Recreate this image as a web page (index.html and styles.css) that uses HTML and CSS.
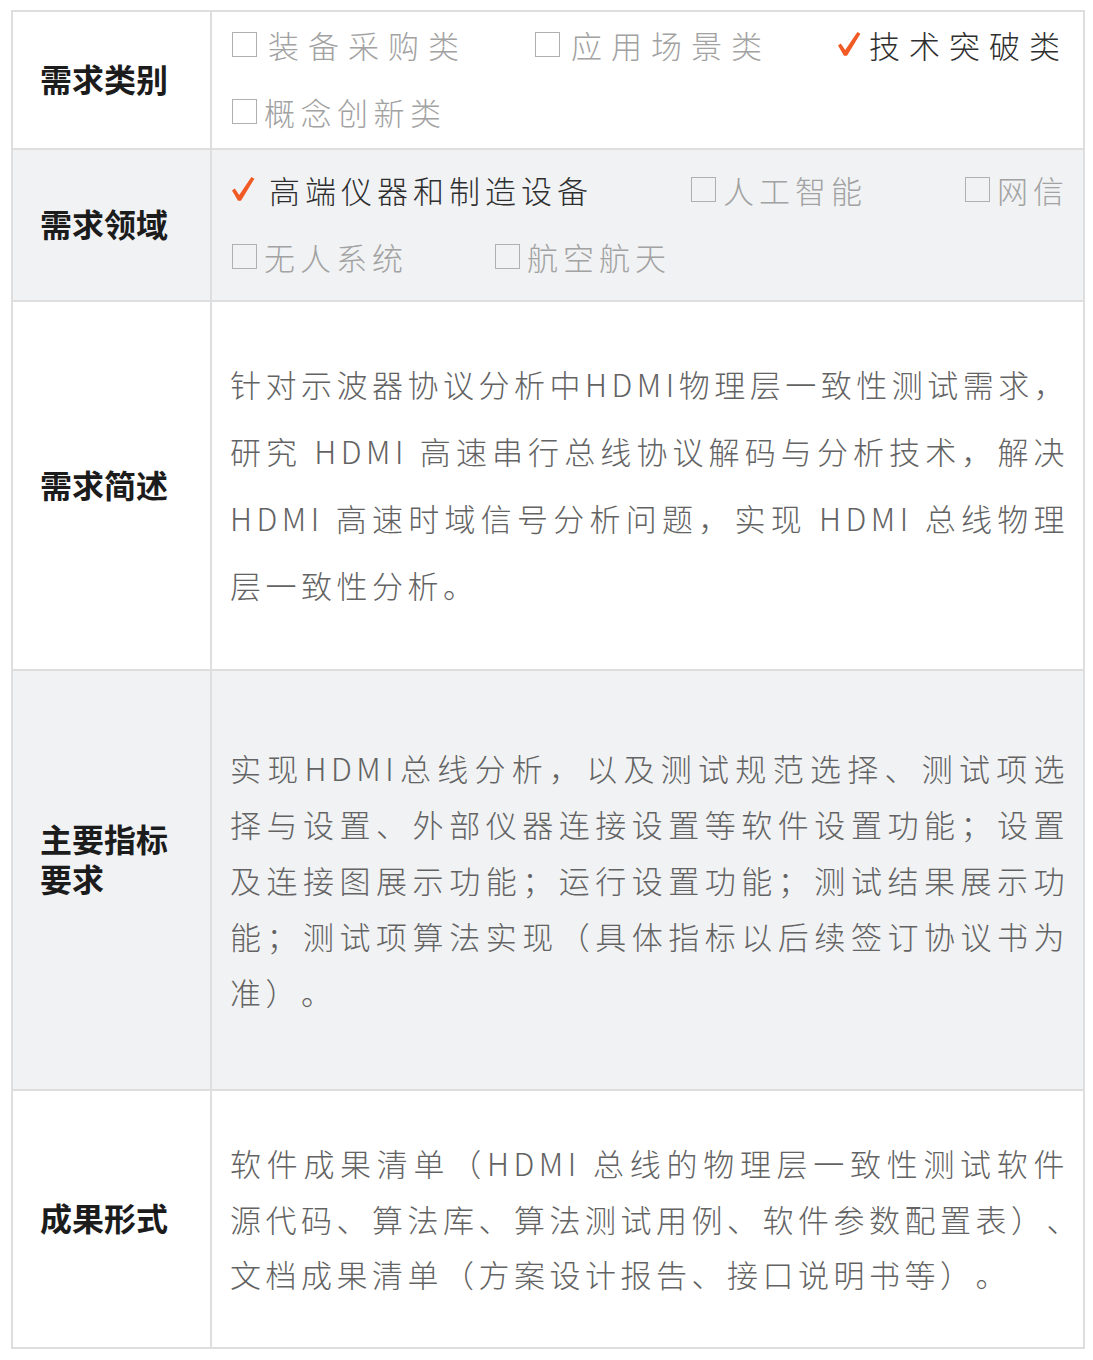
FILE: index.html
```html
<!DOCTYPE html>
<html lang="zh-CN">
<head>
    <meta charset="UTF-8">
    <meta name="viewport" content="width=device-width, initial-scale=1.0">
    <title>需求表</title>
    <link rel="stylesheet" href="styles.css">
</head>
<body>
    <table class="spec">
        <colgroup>
            <col class="col-label">
            <col>
        </colgroup>
        <tr>
            <th class="label">需求类别</th>
            <td class="value value-tight">
                <div class="choice-line spread wide">
                    <span class="choice"><i class="box"></i>装备采购类</span>
                    <span class="choice"><i class="box"></i>应用场景类</span>
                    <span class="choice checked"><svg class="tick" viewBox="0 0 24 26"><path d="M1 14.5 L3.8 12.4 L8.2 19 L20.4 1 L23.4 2.8 L10 24.8 L7 24.8 Z" fill="#f15a24"/></svg>技术突破类</span>
                </div>
                <div class="choice-line">
                    <span class="choice loose"><i class="box"></i>概念创新类</span>
                </div>
            </td>
        </tr>
        <tr class="alt">
            <th class="label">需求领域</th>
            <td class="value value-field">
                <div class="choice-line spread">
                    <span class="choice checked"><svg class="tick tick-wide" viewBox="0 0 24 26"><path d="M1 14.5 L3.8 12.4 L8.2 19 L20.4 1 L23.4 2.8 L10 24.8 L7 24.8 Z" fill="#f15a24"/></svg>高端仪器和制造设备</span>
                    <span class="choice"><i class="box"></i>人工智能</span>
                    <span class="choice"><i class="box"></i>网信</span>
                </div>
                <div class="choice-line gapped">
                    <span class="choice"><i class="box"></i>无人系统</span>
                    <span class="choice"><i class="box"></i>航空航天</span>
                </div>
            </td>
        </tr>
        <tr>
            <th class="label">需求简述</th>
            <td class="value value-brief">
                <div class="para para-brief">
                    <div class="ln">针对示波器协议分析中HDMI物理层一致性测试需求，</div>
                    <div class="ln">研究 HDMI 高速串行总线协议解码与分析技术，解决</div>
                    <div class="ln">HDMI 高速时域信号分析问题，实现 HDMI 总线物理</div>
                    <div class="ln end">层一致性分析。</div>
                </div>
            </td>
        </tr>
        <tr class="alt">
            <th class="label label-raised">主要指标<br>要求</th>
            <td class="value value-spec">
                <div class="para para-spec">
                    <div class="ln">实现HDMI总线分析，以及测试规范选择、测试项选</div>
                    <div class="ln">择与设置、外部仪器连接设置等软件设置功能；设置</div>
                    <div class="ln">及连接图展示功能；运行设置功能；测试结果展示功</div>
                    <div class="ln">能；测试项算法实现（具体指标以后续签订协议书为</div>
                    <div class="ln end">准）。</div>
                </div>
            </td>
        </tr>
        <tr>
            <th class="label">成果形式</th>
            <td class="value value-result">
                <div class="para para-result">
                    <div class="ln">软件成果清单（HDMI 总线的物理层一致性测试软件</div>
                    <div class="ln">源代码、算法库、算法测试用例、软件参数配置表）、</div>
                    <div class="ln end">文档成果清单（方案设计报告、接口说明书等）。</div>
                </div>
            </td>
        </tr>
    </table>
</body>
</html>
```

FILE: styles.css
```css
body {
    margin: 0;
    background: #fff;
    font-family: "Noto Sans CJK SC", "Noto Sans", sans-serif;
}
.spec {
    border-collapse: collapse;
    table-layout: fixed;
    width: 1074px;
    margin: 10px 0 0 11px;
}
.col-label {
    width: 199px;
}
.spec th,
.spec td {
    border: 2px solid #dedede;
}
.alt {
    background: #f1f2f4;
}
.label {
    text-align: left;
    vertical-align: middle;
    padding: 0 8px 4px 27px;
    font-size: 32px;
    font-weight: 700;
    line-height: 40px;
    color: #1c1c1c;
}
.label-raised {
    padding-bottom: 44px;
}
.value {
    vertical-align: middle;
    padding: 0 14px 0 18px;
    font-size: 31px;
    font-weight: 300;
    color: #636363;
    text-spacing-trim: space-all;
}
.value-tight {
    padding-top: 1px;
    padding-bottom: 1px;
}
.value-field {
    padding-top: 8px;
    padding-bottom: 8px;
}
.value-brief {
    padding-top: 48px;
    padding-bottom: 51px;
}
.value-spec {
    padding-top: 69px;
    padding-bottom: 69px;
}
.value-result {
    padding-top: 44px;
    padding-bottom: 45px;
}

/* checkbox rows */
.choice-line {
    display: flex;
    align-items: center;
    box-sizing: border-box;
    height: 67px;
    padding-bottom: 5px;
}
.choice-line.spread {
    justify-content: space-between;
}
.choice-line.gapped {
    gap: 85px;
}
.choice {
    display: inline-flex;
    align-items: center;
    white-space: nowrap;
    letter-spacing: 5px;
    color: #a2a2a2;
}
.wide .choice {
    letter-spacing: 9px;
}
.choice.loose {
    letter-spacing: 5.5px;
}
.choice.checked {
    color: #2e2e2e;
}
.box {
    display: inline-block;
    width: 25px;
    height: 25px;
    box-sizing: border-box;
    border: 1.5px solid #b0b0b0;
    margin: 0 7px 0 2px;
}
.wide .box {
    margin-right: 11px;
}
.tick {
    width: 24px;
    height: 26px;
    margin: 0 8px 0 1px;
}
.tick-wide {
    margin-right: 14px;
}

/* justified paragraphs */
.ln {
    white-space: nowrap;
    text-align: justify;
    text-align-last: justify;
    letter-spacing: 4.5px;
}
.ln.end {
    text-align-last: left;
}
.para-brief {
    line-height: 67px;
}
.para-spec {
    line-height: 56px;
}
.para-result {
    line-height: 55.5px;
}
```
